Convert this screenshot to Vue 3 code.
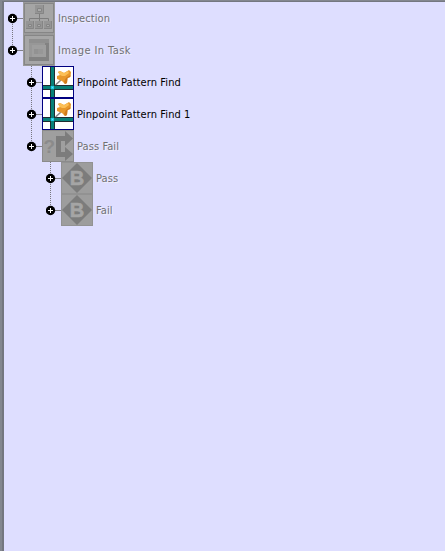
<script setup>
const rows = [
  { label: 'Inspection', level: 0, icon: 'org', down: true, dim: true },
  { label: 'Image In Task', level: 0, icon: 'image', up: true, dim: true, wide: true },
  { label: 'Pinpoint Pattern Find', level: 1, icon: 'pin', up: true, down: true },
  { label: 'Pinpoint Pattern Find 1', level: 1, icon: 'pin', up: true, down: true },
  { label: 'Pass Fail', level: 1, icon: 'branch', up: true, dim: true },
  { label: 'Pass', level: 2, icon: 'block', up: true, down: true, dim: true },
  { label: 'Fail', level: 2, icon: 'block', up: true, dim: true },
]
</script>

<template>
  <main class="panel">
    <div v-for="row in rows" :key="row.label" class="row" :class="['level-' + row.level, { dim: row.dim, wide: row.wide }]">
      <svg class="gutter" width="15" height="32" viewBox="0 0 15 32">
        <path v-if="row.up" d="M4.5 0V12" class="dots" />
        <path v-if="row.down" d="M4.5 22V32" class="dots" />
        <path d="M9 16.5H15" stroke="#808088" />
        <circle cx="4.5" cy="16.5" r="4.7" fill="#000" />
        <path d="M2 16.5H7M4.5 14V19" stroke="#fff" />
      </svg>

      <svg v-if="row.icon === 'org'" width="32" height="32" viewBox="0 0 32 32">
        <rect width="32" height="32" fill="#9a9a9a" />
        <rect x="1.5" y="1.5" width="29" height="29" fill="#a5a5a5" stroke="#868686" />
        <path d="M16.500 12V20M6.500 20V16.500H25.500V20" fill="none" stroke="#7d7d7d" />
        <path d="M12 3h9v9h-9zM3 19h8v8H3zM12 19h8v8h-8zM21 19h8v8h-8z" fill="#959595" />
        <path d="M12 11.500h8.500V3M3 26.500h7.500V19M12 26.500h7.500V19M21 26.500h7.500V19" fill="none" stroke="#858585" />
        <path d="M14.500 6.500h4v3h-4zM5.500 22.500h3v2h-3zM14.500 22.500h3v2h-3zM23.500 22.500h3v2h-3z" fill="#aaa" stroke="#848484" />
      </svg>

      <svg v-else-if="row.icon === 'image'" width="32" height="32" viewBox="0 0 32 32">
        <rect width="32" height="32" fill="#999" />
        <rect x="1.500" y="1.500" width="29" height="29" fill="#a6a6a6" stroke="#868686" />
        <rect x="6" y="5" width="20" height="22" fill="#979797" />
        <path d="M6 5h20v4H6z" fill="#8f8f8f" />
        <path d="M22 9h4v18H6v-4h16z" fill="#828282" />
        <path d="M9 11h14v12H9z" fill="#9e9e9e" />
        <path d="M11 15h9v5h-9z" fill="#929292" />
        <path d="M15 15h5v5h-5z" fill="#979797" />
      </svg>

      <svg v-else-if="row.icon === 'pin'" width="32" height="32" viewBox="0 0 32 32">
        <rect x=".5" y=".5" width="31" height="31" fill="#fff" stroke="#000080" />
        <path d="M8 1h5v30H8zM1 19h30v5H1z" fill="#202c30" />
        <path d="M9 1h3v30H9zM1 20h30v3H1z" fill="#088078" />
        <path d="M9 20h3v3H9z" fill="#20c8e8" />
        <path d="M10 21h1v1h-1z" fill="#50e8ff" />
        <path d="M13.500 19L19 14" stroke="#858585" stroke-width="1.500" />
        <path d="M15 10L18 9L16 6L18 5L22 7L27 4L29 6L28.500 11L25.500 12L25 17L23 18L20 15L15 13Z" fill="#e8982b" />
        <path d="M16 6L18 5L22 7L26 5L27 7L23 10L20 10L18 9Z" fill="#fcbf55" />
        <path d="M24 12L28.500 9L28 11L25.500 12L25 17L23 18L22 16Z" fill="#d07a1c" />
      </svg>

      <svg v-else-if="row.icon === 'branch'" width="32" height="32" viewBox="0 0 32 32">
        <rect width="32" height="32" fill="#949494" />
        <rect x="1" y="1" width="30" height="30" fill="#9f9f9f" />
        <path d="M0 .5H32M.5 0V32M0 31.500H32M31.500 0V32" stroke="#8b8b8b" />
        <path d="M14 6h9V1l8 7.500-8 7.500v-5h-4v11h4v-5l8 7-8 7v-4h-9z" fill="#7c7c7c" />
        <text x="1.500" y="22.500" class="question">?</text>
      </svg>

      <svg v-else width="32" height="32" viewBox="0 0 32 32">
        <rect width="32" height="32" fill="#9d9d9d" />
        <rect x=".5" y=".5" width="31" height="31" fill="none" stroke="#929292" />
        <path d="M16 1L31 16L16 31L1 16Z" fill="#7c7c7c" />
        <text x="16" y="23" class="letter">B</text>
      </svg>

      <span class="label">{{ row.label }}</span>
    </div>
  </main>
</template>

<style>
body { margin: 0; }
</style>

<style scoped>
.panel {
  box-sizing: border-box;
  width: 445px;
  height: 551px;
  overflow: hidden;
  border-left: 2px solid #83878f;
  border-top: 1px solid #83878f;
  box-shadow: inset 2px 1px #747780;
  padding: 1px 0 0 6px;
  background: #dedeff;
}
.row { display: flex; height: 32px; color: #000; }
.row svg { display: block; flex: none; }
.level-1 { padding-left: 19px; }
.level-2 { padding-left: 38px; }
.dots { stroke: #77777f; stroke-dasharray: 1 1; }
.label {
  padding-left: 3px;
  font: 11px/34px "DejaVu Sans Condensed", "DejaVu Sans", sans-serif;
  font-stretch: condensed;
  letter-spacing: 0.09px;
  white-space: pre;
}
.dim .label { color: #707074; text-shadow: 1px 1px #f0f0fa; }
.wide .label { letter-spacing: 0.4px; }
.question { font: bold 19px "Liberation Sans", sans-serif; fill: #8b8b8b; }
.letter { font: bold 20px "Liberation Sans", sans-serif; fill: #a5a5a5; stroke: #a5a5a5; stroke-width: .6px; text-anchor: middle; }
</style>
